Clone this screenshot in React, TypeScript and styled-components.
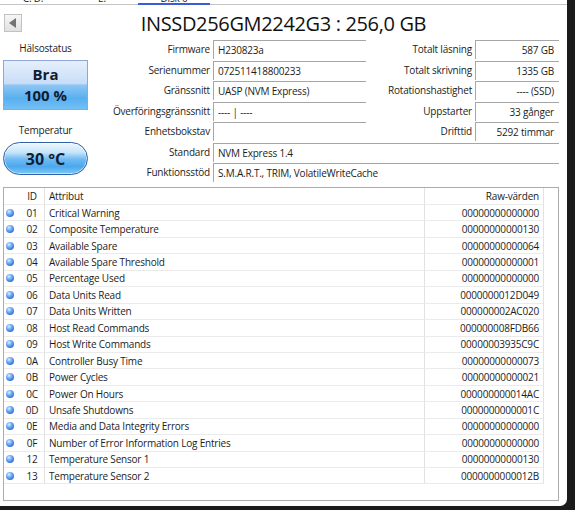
import React from 'react';
import styled, { createGlobalStyle } from 'styled-components';

const Global = createGlobalStyle`
  html, body { margin: 0; padding: 0; background: #1b1b1b; }
  body { font-family: "Open Sans", "Noto Sans", sans-serif; }
  * { box-sizing: border-box; }
`;

const Window = styled.div`
  width: 567px;
  height: 506px;
  background: #fff;
  border-bottom-right-radius: 7px;
  display: flex;
  flex-direction: column;
  overflow: hidden;
  color: #1c1c1c;
  font-size: 10px;
  letter-spacing: -0.2px;
`;

const TabStrip = styled.div`
  display: flex;
  height: 5px;
  overflow: hidden;
`;

const Tab = styled.div<{ $w: number; $active?: boolean }>`
  width: ${p => p.$w}px;
  height: 5px;
  border-bottom: ${p => (p.$active ? '2px solid #3d5bd3' : '1px solid #c4c4c4')};
  text-align: center;
  overflow: hidden;
`;

const TabFill = styled.div`
  flex: 1;
  height: 5px;
  border-bottom: 1px solid #c4c4c4;
`;

const TabLabel = styled.span`
  display: block;
  line-height: 12px;
  margin-top: -8px;
  font-size: 10px;
`;

const Header = styled.div`
  display: grid;
  grid-template-columns: 1fr auto 1fr;
  align-items: center;
  height: 35px;
`;

const BackButton = styled.div`
  width: 18px;
  height: 18px;
  margin-left: 4px;
  margin-top: 1px;
  background: linear-gradient(#f6f6f6, #e1e1e1);
  border: 1px solid #c2c2c2;
  display: flex;
  align-items: center;
  justify-content: center;
  &::before {
    content: '';
    width: 0;
    height: 0;
    border-top: 5px solid transparent;
    border-bottom: 5px solid transparent;
    border-right: 7px solid #737373;
    margin-right: 1px;
  }
`;

const Title = styled.div`
  font-size: 20px;
  letter-spacing: -0.35px;
  color: #111;
  line-height: 26px;
  margin-top: 2px;
`;

const Info = styled.div`
  display: flex;
  padding-left: 3px;
`;

const LeftPanel = styled.div`
  width: 85px;
  display: flex;
  flex-direction: column;
  align-items: stretch;
`;

const PanelLabel = styled.div<{ $gap: number }>`
  margin-top: ${p => p.$gap}px;
  height: 16px;
  line-height: 16px;
  text-align: center;
  margin-bottom: 4px;
`;

const HealthBox = styled.div`
  height: 50px;
  border: 1px solid #8fa6d9;
  background: linear-gradient(to bottom, #e6effc 0%, #c9ddf8 47%, #8fc6f4 50%, #58aff0 78%, #74c0f5 100%);
  display: flex;
  flex-direction: column;
  align-items: center;
  padding-top: 3px;
  font-weight: 700;
  font-size: 15px;
  line-height: 21px;
  letter-spacing: 0;
  color: #101c30;
`;

const TempPill = styled.div`
  height: 33px;
  border: 1px solid #2f62aa;
  border-radius: 17px;
  background: linear-gradient(to bottom, #eef7fe 0%, #c6e5fa 30%, #70bbf3 52%, #4ba8ee 76%, #7fc8f7 100%);
  box-shadow: inset 0 0 0 1px rgba(255, 255, 255, 0.55);
  display: flex;
  align-items: center;
  justify-content: center;
  font-weight: 700;
  font-size: 16px;
  letter-spacing: 0;
  color: #0f1f36;
`;

const InfoGrid = styled.div`
  display: grid;
  grid-template-columns: 125px 153px 109px 84px;
  grid-auto-rows: 20.5px;
`;

const Label = styled.div`
  text-align: right;
  padding-right: 3px;
  line-height: 19px;
  white-space: nowrap;
`;

const Value = styled.div<{ $right?: boolean; $span?: boolean }>`
  height: 19px;
  border-top: 1px solid #a6a6a6;
  border-left: 1px solid #a6a6a6;
  line-height: 18px;
  padding: ${p => (p.$right ? '0 5px 0 0' : '0 0 0 4px')};
  text-align: ${p => (p.$right ? 'right' : 'left')};
  grid-column: ${p => (p.$span ? 'span 3' : 'auto')};
  white-space: nowrap;
`;

const Table = styled.div`
  margin: 3px 8px 5px 3px;
  flex: 1;
  border: 1px solid #acacac;
  display: flex;
  flex-direction: column;
`;

const Row = styled.div<{ $h: number }>`
  display: grid;
  grid-template-columns: 16px 25px 380px 119px 1fr;
  height: ${p => p.$h}px;
`;

const Cell = styled.div<{ $align?: 'left' | 'center' | 'right'; $divider?: boolean }>`
  display: flex;
  align-items: center;
  justify-content: ${p => (p.$align === 'right' ? 'flex-end' : p.$align === 'center' ? 'center' : 'flex-start')};
  padding: ${p => (p.$align === 'right' ? '0 4px 0 0' : p.$align === 'left' ? '0 0 0 4px' : '0')};
  border-right: ${p => (p.$divider ? '1px solid #e2e2e2' : 'none')};
  border-bottom: 1px solid #ebebeb;
  white-space: nowrap;
  overflow: hidden;
`;

const DotCell = styled(Cell)`
  padding-left: 2px;
`;

const Dot = styled.span`
  width: 8px;
  height: 8px;
  border-radius: 50%;
  background: radial-gradient(circle at 38% 32%, #e0f0ff 0%, #7db8f6 30%, #3f78e2 68%, #2446b6 100%);
`;

const Filler = styled.div``;

const info: [string, string, string, string][] = [
  ['Firmware', 'H230823a', 'Totalt läsning', '587 GB'],
  ['Serienummer', '072511418800233', 'Totalt skrivning', '1335 GB'],
  ['Gränssnitt', 'UASP (NVM Express)', 'Rotationshastighet', '---- (SSD)'],
  ['Överföringsgränssnitt', '---- | ----', 'Uppstarter', '33 gånger'],
  ['Enhetsbokstav', '', 'Drifttid', '5292 timmar'],
];

const attrs: [string, string, string][] = [
  ['01', 'Critical Warning', '00000000000000'],
  ['02', 'Composite Temperature', '00000000000130'],
  ['03', 'Available Spare', '00000000000064'],
  ['04', 'Available Spare Threshold', '00000000000001'],
  ['05', 'Percentage Used', '00000000000000'],
  ['06', 'Data Units Read', '0000000012D049'],
  ['07', 'Data Units Written', '000000002AC020'],
  ['08', 'Host Read Commands', '000000008FDB66'],
  ['09', 'Host Write Commands', '00000003935C9C'],
  ['0A', 'Controller Busy Time', '00000000000073'],
  ['0B', 'Power Cycles', '00000000000021'],
  ['0C', 'Power On Hours', '000000000014AC'],
  ['0D', 'Unsafe Shutdowns', '0000000000001C'],
  ['0E', 'Media and Data Integrity Errors', '00000000000000'],
  ['0F', 'Number of Error Information Log Entries', '00000000000000'],
  ['12', 'Temperature Sensor 1', '00000000000130'],
  ['13', 'Temperature Sensor 2', '0000000000012B'],
];

export default function App() {
  return (
    <>
      <Global />
      <Window>
        <TabStrip>
          <Tab $w={66}><TabLabel>C: D:</TabLabel></Tab>
          <Tab $w={72}><TabLabel>E:</TabLabel></Tab>
          <Tab $w={72} $active><TabLabel>Disk 0</TabLabel></Tab>
          <TabFill />
        </TabStrip>
        <Header>
          <BackButton />
          <Title>INSSD256GM2242G3 : 256,0 GB</Title>
          <div />
        </Header>
        <Info>
          <LeftPanel>
            <PanelLabel $gap={0}>Hälsostatus</PanelLabel>
            <HealthBox>
              <span>Bra</span>
              <span>100 %</span>
            </HealthBox>
            <PanelLabel $gap={12}>Temperatur</PanelLabel>
            <TempPill>30 °C</TempPill>
          </LeftPanel>
          <InfoGrid>
            {info.map(([l, v, rl, rv]) => (
              <React.Fragment key={l}>
                <Label>{l}</Label>
                <Value>{v}</Value>
                <Label>{rl}</Label>
                <Value $right>{rv}</Value>
              </React.Fragment>
            ))}
            <Label>Standard</Label>
            <Value $span>NVM Express 1.4</Value>
            <Label>Funktionsstöd</Label>
            <Value $span>S.M.A.R.T., TRIM, VolatileWriteCache</Value>
          </InfoGrid>
        </Info>
        <Table>
          <Row $h={17.5}>
            <Cell />
            <Cell $align="center" $divider>ID</Cell>
            <Cell $align="left" $divider>Attribut</Cell>
            <Cell $align="right" $divider>Raw-värden</Cell>
            <Filler />
          </Row>
          {attrs.map(([id, name, raw]) => (
            <Row $h={16.45} key={id}>
              <DotCell><Dot /></DotCell>
              <Cell $align="center" $divider>{id}</Cell>
              <Cell $align="left" $divider>{name}</Cell>
              <Cell $align="right" $divider>{raw}</Cell>
              <Filler />
            </Row>
          ))}
        </Table>
      </Window>
    </>
  );
}
